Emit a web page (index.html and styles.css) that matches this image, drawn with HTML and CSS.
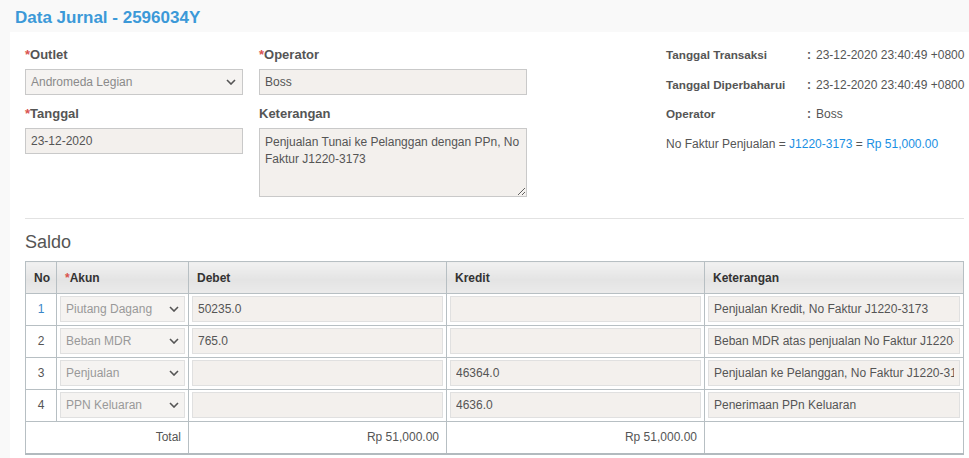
FILE: index.html
```html
<!DOCTYPE html>
<html lang="id">
<head>
    <meta charset="UTF-8">
    <meta name="viewport" content="width=device-width, initial-scale=1.0">
    <title>Data Jurnal - 2596034Y</title>
    <link rel="stylesheet" href="styles.css">
</head>
<body>
    <h1 class="page-title">Data Jurnal - 2596034Y</h1>

    <div class="panel">
        <div class="form-top">
            <div class="form-left">
                <label class="field-label"><span class="req">*</span>Outlet</label>
                <div class="select field">
                    <span>Andromeda Legian</span>
                    <svg width="10" height="6" viewBox="0 0 10 6"><path d="M1 1l4 4 4-4" fill="none" stroke="#555" stroke-width="1.6"/></svg>
                </div>

                <label class="field-label"><span class="req">*</span>Tanggal</label>
                <input class="text-input field" type="text" value="23-12-2020" readonly>
            </div>

            <div class="form-mid">
                <label class="field-label"><span class="req">*</span>Operator</label>
                <input class="text-input field" type="text" value="Boss" readonly>

                <label class="field-label">Keterangan</label>
                <textarea class="text-area field" readonly>Penjualan Tunai ke Pelanggan dengan PPn, No Faktur J1220-3173</textarea>
            </div>

            <div class="info">
                <div class="info-row"><span class="info-label">Tanggal Transaksi</span><span class="info-colon">:</span><span>23-12-2020 23:40:49 +0800</span></div>
                <div class="info-row"><span class="info-label">Tanggal Diperbaharui</span><span class="info-colon">:</span><span>23-12-2020 23:40:49 +0800</span></div>
                <div class="info-row"><span class="info-label">Operator</span><span class="info-colon">:</span><span>Boss</span></div>
                <div class="info-row faktur">No Faktur Penjualan = <span class="link">J1220-3173</span> = <span class="link">Rp 51,000.00</span></div>
            </div>
        </div>

        <hr class="divider">

        <h2 class="section-title">Saldo</h2>

        <table class="saldo">
            <colgroup>
                <col class="c-no">
                <col class="c-akun">
                <col class="c-debet">
                <col class="c-kredit">
                <col class="c-ket">
            </colgroup>
            <thead>
                <tr>
                    <th>No</th>
                    <th><span class="req">*</span>Akun</th>
                    <th>Debet</th>
                    <th>Kredit</th>
                    <th>Keterangan</th>
                </tr>
            </thead>
            <tbody id="rows"></tbody>
            <tfoot>
                <tr>
                    <td colspan="2" class="num">Total</td>
                    <td class="num">Rp 51,000.00</td>
                    <td class="num">Rp 51,000.00</td>
                    <td></td>
                </tr>
            </tfoot>
        </table>
    </div>

    <script>
    const entries = [
        { akun: "Piutang Dagang", debet: "50235.0", kredit: "", ket: "Penjualan Kredit, No Faktur J1220-3173" },
        { akun: "Beban MDR", debet: "765.0", kredit: "", ket: "Beban MDR atas penjualan No Faktur J1220-3173" },
        { akun: "Penjualan", debet: "", kredit: "46364.0", ket: "Penjualan ke Pelanggan, No Faktur J1220-3173" },
        { akun: "PPN Keluaran", debet: "", kredit: "4636.0", ket: "Penerimaan PPn Keluaran" }
    ];

    const tbody = document.getElementById("rows");
    const chevron = '<svg width="10" height="6" viewBox="0 0 10 6"><path d="M1 1l4 4 4-4" fill="none" stroke="#555" stroke-width="1.6"/></svg>';

    entries.forEach((e, i) => {
        const row = document.createElement("tr");
        row.innerHTML =
            `<td class="no${i === 0 ? " first" : ""}">${i + 1}</td>` +
            `<td><div class="select small"><span>${e.akun}</span>${chevron}</div></td>` +
            `<td><input class="cell-input" type="text" value="${e.debet}" readonly></td>` +
            `<td><input class="cell-input" type="text" value="${e.kredit}" readonly></td>` +
            `<td><input class="cell-input" type="text" value="${e.ket}" readonly></td>`;
        tbody.appendChild(row);
    });
    </script>
</body>
</html>
```

FILE: styles.css
```css
body {
  margin: 0;
  padding: 0;
  font-family: "Liberation Sans", Arial, sans-serif;
  font-size: 12px;
  color: #555;
  background: #f9f9f9;
}

.page-title {
  margin: 0;
  padding: 8px 15px 4px;
  font-size: 17px;
  line-height: 20px;
  font-weight: bold;
  color: #3c99d8;
}

/* White card holding the form and the table */
.panel {
  margin-left: 10px;
  padding: 14px 5px 20px 15px;
  background: #fff;
}

.req {
  color: #d9534f;
}

/* Top form: two columns of fields + info block on the right */
.form-top {
  display: flex;
}
.form-left {
  width: 218px;
  display: flex;
  flex-direction: column;
}
.form-mid {
  width: 268px;
  margin-left: 16px;
  display: flex;
  flex-direction: column;
}
.field-label {
  display: block;
  font-size: 13px;
  font-weight: bold;
  line-height: 18px;
  margin-bottom: 5px;
  color: #555;
}

.text-input,
.text-area,
.select {
  box-sizing: border-box;
  width: 100%;
  height: 26px;
  border: 1px solid #c9c9c9;
  background: #f3f0ed;
  font-family: inherit;
  font-size: 12px;
  color: #555;
  padding: 0 5px;
  margin: 0;
  outline: none;
}
.text-area {
  height: 69px;
  padding: 5px 4px 5px 5px;
  line-height: 17px;
  resize: both;
}
.select {
  display: flex;
  align-items: center;
  justify-content: space-between;
  color: #8a8a8a;
  background: #f5f3f1;
  padding-right: 6px;
}
.form-top .field {
  margin-bottom: 10px;
}

.info {
  margin-left: auto;
  width: 298px;
}
.info-row {
  line-height: 18px;
  margin-bottom: 11.5px;
  white-space: nowrap;
}
.info-label {
  display: inline-block;
  width: 141px;
  font-weight: bold;
  font-size: 11.7px;
  color: #555;
}
.info-colon {
  display: inline-block;
  width: 9px;
  font-weight: bold;
}
.link {
  color: #1a8fe3;
}

.divider {
  border: 0;
  border-top: 1px solid #e2e2e2;
  margin: 11px 0 12px;
}

.section-title {
  margin: 0 0 8px;
  font-size: 18px;
  font-weight: normal;
  line-height: 22px;
  color: #555;
}

/* Saldo table */
.saldo {
  width: 939px;
  table-layout: fixed;
  border-collapse: collapse;
  border-bottom: 2px solid #b2babe;
}
.c-no { width: 31px; }
.c-akun { width: 132px; }
.c-debet { width: 258px; }
.c-kredit { width: 258px; }
.saldo th,
.saldo td {
  border: 1px solid #b7bfc3;
}
.saldo th {
  text-align: left;
  padding: 0 8px;
  height: 31px;
  font-weight: bold;
  color: #333;
  background: linear-gradient(#f1f1f1, #e4e4e4 55%, #ebebeb);
}
.saldo td {
  padding: 2px 3px 3px;
}
.saldo td.no {
  text-align: center;
  color: #555;
}
.saldo td.no.first {
  color: #3a86c8;
}
.saldo td.num {
  text-align: right;
  padding-right: 7px;
}
.saldo tfoot td {
  height: 26px;
}

.cell-input {
  box-sizing: border-box;
  width: 100%;
  height: 26px;
  border: 1px solid #e0e0e0;
  background: #f3f0ed;
  font-family: inherit;
  font-size: 12px;
  color: #555;
  padding: 0 5px;
  margin: 0;
  outline: none;
}
.select.small {
  border-color: #e0e0e0;
  color: #999;
  padding-right: 5px;
}
```
